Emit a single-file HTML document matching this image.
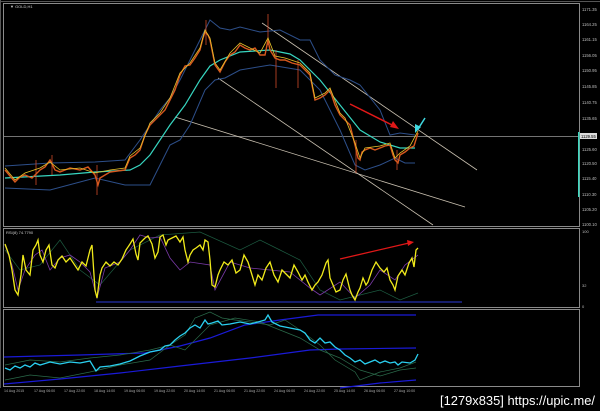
<!DOCTYPE html>
<html><head><meta charset="utf-8"><style>
html,body{margin:0;padding:0;background:#000;width:600px;height:411px;overflow:hidden}
svg{display:block}
text{font-family:"Liberation Sans",sans-serif}
</style></head><body>
<svg width="600" height="411" viewBox="0 0 600 411" xmlns="http://www.w3.org/2000/svg">
<rect width="600" height="411" fill="#000"/>
<rect x="3.5" y="3.5" width="576" height="223" fill="none" stroke="#8a8a8a" stroke-width="1"/>
<rect x="3.5" y="228.5" width="576" height="79" fill="none" stroke="#8a8a8a" stroke-width="1"/>
<rect x="3.5" y="309.5" width="576" height="77" fill="none" stroke="#8a8a8a" stroke-width="1"/>
<line x1="0.5" y1="0" x2="0.5" y2="388" stroke="#555"/>
<line x1="0" y1="1.5" x2="600" y2="1.5" stroke="#555"/>
<text x="10" y="8" font-size="4" fill="#ccc">▼ GOLD,H1</text>

<line x1="4" y1="136.5" x2="579" y2="136.5" stroke="#9a9a9a" stroke-width="0.8"/>
<g stroke="#c9c0b0" stroke-width="0.8" fill="none">
<line x1="262" y1="23" x2="477" y2="170"/>
<line x1="218" y1="78" x2="433" y2="225"/>
<line x1="175" y1="117" x2="465" y2="207"/>
</g>
<polyline fill="none" stroke="#2d4f8a" stroke-width="1" points="5,166 50,163 95,162 125,160 140,140 160,110 170,98 180,80 200,40 210,20 220,28 230,30 240,27 260,32 280,30 300,40 310,40 320,60 335,75 350,80 360,85 380,110 390,135 400,133 415,135"/>
<polyline fill="none" stroke="#2d4f8a" stroke-width="1" points="5,188 50,190 95,178 125,185 150,185 170,145 180,140 190,125 205,90 215,80 225,78 240,70 270,65 300,70 320,90 340,130 355,165 365,170 380,165 395,158 405,163 415,163"/>
<polyline fill="none" stroke="#37d6c0" stroke-width="1.2" points="5,178 60,175 95,172 130,170 140,165 150,155 170,125 185,105 200,80 210,66 220,60 240,52 270,50 290,54 300,60 320,80 340,105 360,130 380,142 400,148 415,148"/>
<g stroke="#d04a2a" stroke-width="0.8">
<line x1="36" y1="160" x2="36" y2="185"/><line x1="52" y1="155" x2="52" y2="175"/>
<line x1="97" y1="165" x2="97" y2="195"/><line x1="206" y1="20" x2="206" y2="45"/>
<line x1="268" y1="14" x2="268" y2="45"/><line x1="276" y1="50" x2="276" y2="88"/>
<line x1="298" y1="60" x2="298" y2="88"/><line x1="356" y1="140" x2="356" y2="173"/>
<line x1="397" y1="150" x2="397" y2="170"/>
</g>
<polyline fill="none" stroke="#d8581e" stroke-width="1.4" points="5,170 10,176 15,182 20,177 25,175 32,178 40,170 45,167 50,160 55,170 60,172 70,168 80,170 88,167 95,175 98,185 100,178 110,172 125,170 130,158 135,155 140,150 145,135 150,125 155,120 160,115 165,110 170,100 175,90 180,75 185,66 190,65 195,58 200,50 203,38 205,32 208,35 210,40 213,55 215,65 220,72 225,62 230,55 235,52 240,45 245,48 250,50 255,48 260,55 265,55 268,40 270,50 275,58 280,60 285,60 292,63 300,65 305,70 310,75 313,90 315,100 320,98 325,95 330,90 335,105 340,115 345,120 350,125 355,145 358,158 360,160 362,152 365,150 370,148 375,150 380,148 385,146 390,145 393,155 395,160 398,163 400,155 405,152 410,148 414,146 418,133"/>
<polyline fill="none" stroke="#e8c22a" stroke-width="0.8" points="5,168 15,180 25,173 40,168 50,162 60,170 80,168 95,173 110,170 125,168 130,156 140,148 150,123 160,113 170,98 180,73 190,63 200,48 205,30 210,38 215,63 220,70 230,53 240,43 250,48 260,53 268,38 275,56 285,58 300,63 310,73 315,98 325,93 330,88 340,113 345,118 355,143 360,158 365,148 380,146 390,143 395,158 400,153 410,146 418,131"/>
<line x1="350" y1="104" x2="394" y2="126" stroke="#e01818" stroke-width="1.5"/>
<polygon points="399,129 390,127 393,121" fill="#e01818"/>
<line x1="425" y1="118" x2="418" y2="129" stroke="#3fd8e0" stroke-width="1.5"/>
<polygon points="415,133 415,124 421,127" fill="#3fd8e0"/>
<g font-size="4.2" fill="#bbb">
<text x="582" y="11">1171.35</text><text x="582" y="26">1164.25</text><text x="582" y="41">1161.15</text>
<text x="582" y="57">1156.05</text><text x="582" y="72">1150.95</text><text x="582" y="88">1145.85</text>
<text x="582" y="104">1140.75</text><text x="582" y="120">1135.65</text><text x="582" y="151">1125.60</text>
<text x="582" y="165">1120.50</text><text x="582" y="180">1115.40</text><text x="582" y="196">1110.30</text>
<text x="582" y="211">1105.20</text><text x="582" y="226">1100.10</text>
</g>
<rect x="578" y="132" width="1.5" height="65" fill="#3fd8c0"/>
<rect x="580" y="133" width="17" height="6" fill="#ddd"/>
<text x="581" y="138" font-size="4.2" fill="#000">1129.55</text>

<text x="6" y="234" font-size="4" fill="#ccc">RSI(8) 74.7790</text>
<g font-size="4" fill="#bbb"><text x="582" y="233">100</text><text x="582" y="287">32</text><text x="582" y="308">0</text></g>
<line x1="96" y1="302" x2="462" y2="302" stroke="#2a3ad8" stroke-width="1"/>
<polyline fill="none" stroke="#1c5a40" stroke-width="0.7" points="5,250 20,270 40,265 60,240 80,270 100,285 130,250 160,235 200,232 240,250 260,240 280,250 300,260 320,290 340,300 360,295 380,290 400,300 418,293"/>
<polyline fill="none" stroke="#7a3aa8" stroke-width="0.8" points="5,245 12,265 18,290 25,270 35,255 42,250 50,270 60,258 70,255 80,262 90,272 97,298 105,268 120,262 130,250 140,235 150,238 160,237 170,258 180,270 190,262 210,265 215,290 230,262 250,268 270,270 290,272 310,288 320,295 340,282 355,298 370,285 380,270 395,280 405,265 418,255"/>
<polyline fill="none" stroke="#f0ea1a" stroke-width="1.3" points="5,244 9,255 12,270 15,290 18,295 21,275 23,255 26,270 30,275 33,250 36,245 38,240 40,255 43,262 46,250 49,245 52,265 55,268 58,260 62,256 66,262 70,258 74,264 78,270 82,262 86,266 90,250 92,245 95,290 97,298 100,275 102,268 106,262 110,266 114,262 118,265 122,259 126,250 130,244 133,239 136,254 138,260 140,243 145,238 148,236 152,244 155,258 158,252 160,237 163,235 166,245 168,240 172,238 176,236 180,242 183,237 185,250 188,262 190,255 193,250 196,248 200,245 203,250 205,240 208,242 210,260 212,285 215,287 218,275 220,270 224,262 228,265 232,260 236,273 240,270 244,255 248,262 252,275 255,285 258,275 262,280 266,268 270,262 274,275 278,282 282,270 286,274 290,278 294,265 298,272 302,280 305,275 308,282 312,290 315,285 318,282 322,275 326,263 328,260 330,278 333,285 336,292 340,290 343,280 346,274 350,290 352,295 355,300 358,292 360,288 363,278 366,285 368,282 372,270 376,262 380,268 384,272 387,268 390,280 393,285 395,290 398,276 402,270 405,275 409,263 412,258 414,267 416,250 418,248"/>
<line x1="340" y1="259" x2="409" y2="243" stroke="#e01818" stroke-width="1.3"/>
<polygon points="414,242 407,240 408,246" fill="#e01818"/>

<!-- bottom panel -->
<polyline fill="none" stroke="#1a1ad8" stroke-width="1.2" points="4,357 80,355 145,353 180,346 210,338 245,325 280,320 318,315 416,315"/>
<polyline fill="none" stroke="#1a1ad8" stroke-width="1.2" points="4,384 60,379 120,373 180,366 250,358 310,350 340,349 416,348"/>
<polyline fill="none" stroke="#1a1ad8" stroke-width="1.2" points="340,388 380,383 416,380"/>
<polyline fill="none" stroke="#2a6a4a" stroke-width="0.7" points="5,380 30,375 60,378 90,372 120,365 150,360 170,345 185,335 195,318 210,312 222,318 235,320 250,322 270,325 285,320 300,330 320,345 335,360 355,372 360,380 380,372 400,368 416,362"/>
<polyline fill="none" stroke="#2a6a4a" stroke-width="0.7" points="5,365 30,360 60,362 90,358 120,355 150,350 170,345 185,350 200,335 210,325 235,318 260,322 280,330 300,338 320,350 340,358 360,370 380,376 400,370 416,368"/>
<polyline fill="none" stroke="#2ad0f0" stroke-width="1.3" points="5,368 10,370 15,366 20,368 25,365 30,367 35,363 40,365 50,362 60,364 70,362 80,363 90,361 96,371 100,367 110,366 120,364 130,361 140,356 150,352 160,350 165,346 170,345 175,340 180,336 185,333 190,328 195,325 200,328 205,320 208,324 212,323 218,321 222,325 230,324 240,322 250,324 258,322 265,320 268,315 272,322 280,326 290,328 300,330 305,333 310,340 315,343 320,338 325,343 330,342 335,347 340,350 345,355 350,358 355,362 360,360 365,364 370,362 375,360 380,363 385,361 390,363 395,362 398,365 402,362 410,363 415,360 418,354"/>

<g font-size="3.6" fill="#aaa">
<text x="4" y="392">14 Aug 2015</text><text x="34" y="392">17 Aug 06:00</text><text x="64" y="392">17 Aug 22:00</text>
<text x="94" y="392">18 Aug 14:00</text><text x="124" y="392">19 Aug 06:00</text><text x="154" y="392">19 Aug 22:00</text>
<text x="184" y="392">20 Aug 14:00</text><text x="214" y="392">21 Aug 06:00</text><text x="244" y="392">21 Aug 22:00</text>
<text x="274" y="392">24 Aug 06:00</text><text x="304" y="392">24 Aug 22:00</text><text x="334" y="392">25 Aug 14:00</text>
<text x="364" y="392">26 Aug 06:00</text><text x="394" y="392">27 Aug 10:00</text>
</g>
<text x="440" y="405" font-size="13" fill="#fff" textLength="155" lengthAdjust="spacingAndGlyphs">[1279x835] https://upic.me/</text>
</svg>
</body></html>
